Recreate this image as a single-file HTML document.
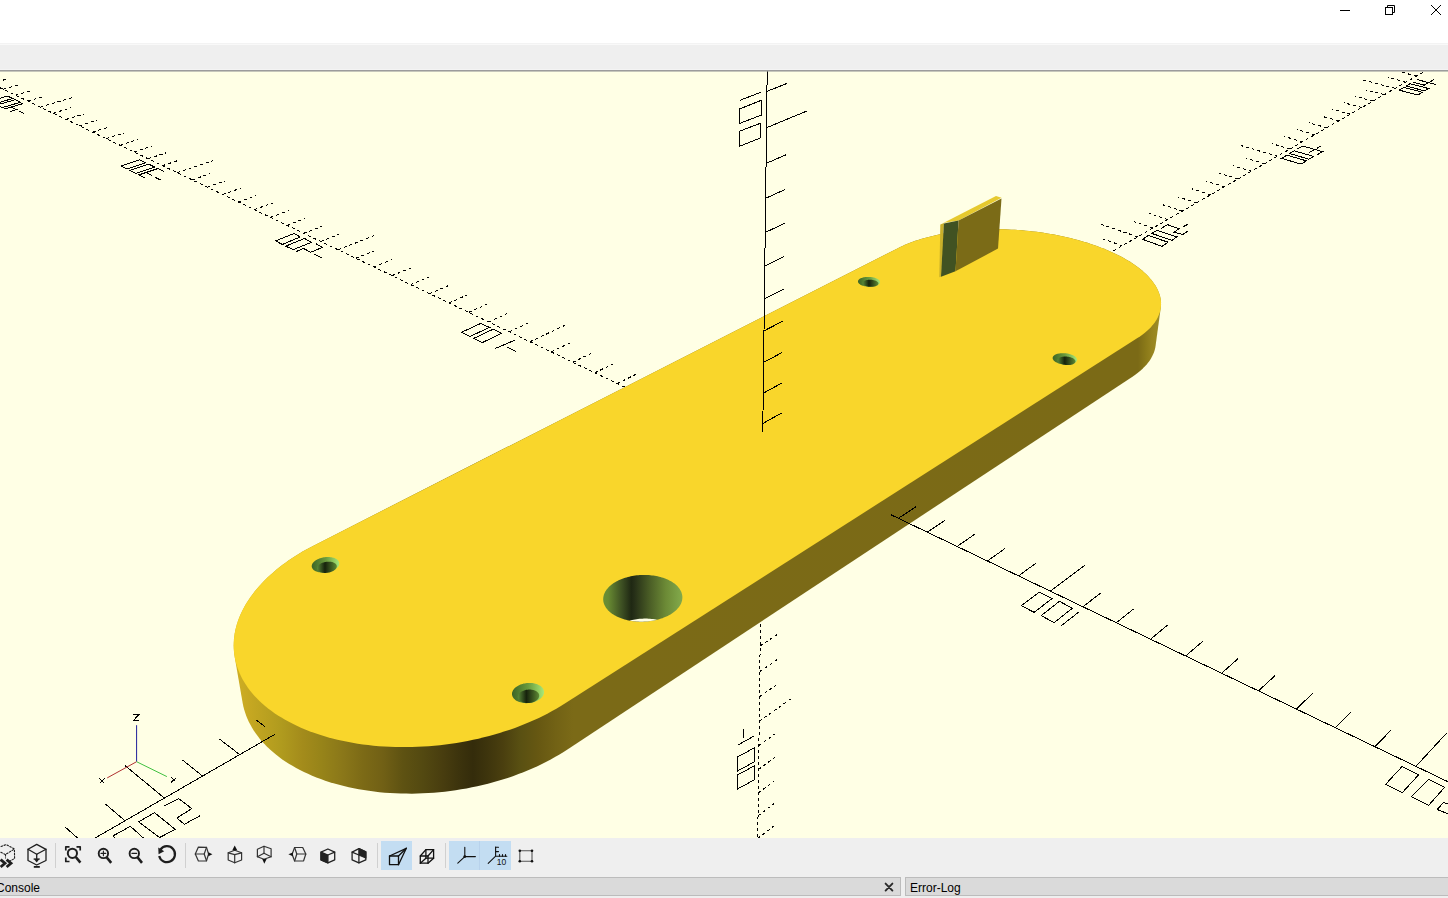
<!DOCTYPE html>
<html><head><meta charset="utf-8">
<style>
html,body{margin:0;padding:0;width:1448px;height:898px;overflow:hidden;background:#fff;font-family:"Liberation Sans",sans-serif;}
#title{position:absolute;left:0;top:0;width:1448px;height:43px;background:#fff;}
#menu{position:absolute;left:0;top:43px;width:1448px;height:27px;background:#efefef;border-top:1px solid #f3f3f3;box-sizing:border-box;}
#menuw{position:absolute;left:0;top:44px;width:1448px;height:1px;background:#f9f9f9;}
#vp{position:absolute;left:0;top:70px;width:1448px;height:768px;background:#ffffe5;}
#vpline{position:absolute;left:0;top:70px;width:1448px;height:1px;background:#9c9c9c;}
#vpline2{position:absolute;left:0;top:71px;width:1448px;height:1px;background:#c6c7bb;}
#vpline0{position:absolute;left:0;top:69px;width:1448px;height:1px;background:#f4f4f4;}
#tb{position:absolute;left:0;top:838px;width:1448px;height:39px;background:#efefef;}
#tabs{position:absolute;left:0;top:877px;width:1448px;height:21px;background:#efefef;}
.tab{position:absolute;top:877px;height:19px;background:#dadada;border:1px solid #bcbcbc;box-sizing:border-box;font-size:12px;color:#000;line-height:17px;}
svg{position:absolute;left:0;top:0;}
.k{stroke:#000;stroke-width:1;fill:none;shape-rendering:crispEdges;}
.d{stroke:#000;stroke-width:1;fill:none;stroke-dasharray:3 3;shape-rendering:crispEdges;}
.ic{stroke:#1a1a1a;stroke-width:1.4;fill:none;stroke-linejoin:round;}
.sep{position:absolute;top:843px;width:1px;height:25px;background:#d0d0d0;}
.hl{position:absolute;top:841px;height:29px;background:#c3ddf2;}
</style></head><body>
<div id="title"></div>
<svg width="1448" height="43" style="top:0">
 <line x1="1340" y1="10.5" x2="1350" y2="10.5" stroke="#000" stroke-width="1"/>
 <rect x="1385.5" y="7.5" width="7" height="7" fill="none" stroke="#000" stroke-width="1"/>
 <polyline points="1387.5,7.5 1387.5,5.5 1394.5,5.5 1394.5,12.5 1392.5,12.5" fill="none" stroke="#000" stroke-width="1"/>
 <line x1="1431" y1="5" x2="1441" y2="15" stroke="#000" stroke-width="1"/>
 <line x1="1441" y1="5" x2="1431" y2="15" stroke="#000" stroke-width="1"/>
</svg>
<div id="menu"></div><div id="menuw"></div>
<div id="vp"></div>
<div id="vpline0"></div><div id="vpline"></div><div id="vpline2"></div>
<svg width="1448" height="898" viewBox="0 0 1448 898" style="top:0">
<defs>
 <clipPath id="vpc"><rect x="0" y="71.5" width="1448" height="766.5"/></clipPath>
 <linearGradient id="side" gradientUnits="userSpaceOnUse" x1="234" y1="0" x2="1162" y2="0">
  <stop offset="0.0000" stop-color="#d0b024"/>
  <stop offset="0.0129" stop-color="#c8a922"/>
  <stop offset="0.0506" stop-color="#b09b1e"/>
  <stop offset="0.0744" stop-color="#a38b1b"/>
  <stop offset="0.0938" stop-color="#978419"/>
  <stop offset="0.1175" stop-color="#8a7719"/>
  <stop offset="0.1390" stop-color="#7c6a16"/>
  <stop offset="0.1606" stop-color="#716015"/>
  <stop offset="0.1821" stop-color="#5e5212"/>
  <stop offset="0.2037" stop-color="#534911"/>
  <stop offset="0.2252" stop-color="#483d0f"/>
  <stop offset="0.2414" stop-color="#3d340d"/>
  <stop offset="0.2575" stop-color="#342c0b"/>
  <stop offset="0.2737" stop-color="#3e350d"/>
  <stop offset="0.2899" stop-color="#4a3f0f"/>
  <stop offset="0.3082" stop-color="#595012"/>
  <stop offset="0.3287" stop-color="#675812"/>
  <stop offset="0.3470" stop-color="#726215"/>
  <stop offset="0.3653" stop-color="#7b6a17"/>
  <stop offset="0.9741" stop-color="#7b6a16"/>
  <stop offset="0.9828" stop-color="#8b7a19"/>
  <stop offset="0.9892" stop-color="#97841f"/>
  <stop offset="0.9957" stop-color="#9c8b24"/>
  <stop offset="1.0000" stop-color="#a08f26"/>
 </linearGradient>
 <linearGradient id="cs" x1="0" y1="0" x2="1" y2="0">
  <stop offset="0" stop-color="#3d6526"/>
  <stop offset="0.5" stop-color="#6a9a3c"/>
  <stop offset="1" stop-color="#a8e878"/>
 </linearGradient>
 <linearGradient id="bore" x1="0" y1="0" x2="1" y2="0">
  <stop offset="0" stop-color="#5a8a38"/>
  <stop offset="0.4" stop-color="#16220c"/>
  <stop offset="1" stop-color="#5f8a34"/>
 </linearGradient>
 <linearGradient id="big" x1="0" y1="0" x2="1" y2="0">
  <stop offset="0" stop-color="#6a9035"/>
  <stop offset="0.063" stop-color="#688a32"/>
  <stop offset="0.24" stop-color="#3c4e22"/>
  <stop offset="0.355" stop-color="#1f2813"/>
  <stop offset="0.39" stop-color="#252e17"/>
  <stop offset="0.59" stop-color="#4b5e26"/>
  <stop offset="0.79" stop-color="#6c8a36"/>
  <stop offset="0.955" stop-color="#7ea447"/>
  <stop offset="1" stop-color="#82a84a"/>
 </linearGradient>
</defs>
<g clip-path="url(#vpc)">
<polygon points="1132.82,376.38 567.09,749.65 563.16,752.18 559.12,754.66 554.97,757.08 550.72,759.44 546.38,761.74 541.94,763.98 537.41,766.14 532.8,768.24 528.1,770.27 523.32,772.23 518.46,774.11 513.53,775.91 508.53,777.63 503.47,779.28 498.34,780.84 493.16,782.32 487.93,783.71 482.65,785.02 477.33,786.24 471.96,787.36 466.57,788.4 461.14,789.35 455.69,790.21 450.22,790.97 444.73,791.64 439.23,792.21 433.73,792.68 428.23,793.07 422.72,793.35 417.23,793.54 411.75,793.63 406.29,793.62 400.86,793.52 395.45,793.32 390.07,793.02 384.73,792.63 379.43,792.14 374.18,791.55 368.98,790.87 363.84,790.1 358.76,789.23 353.74,788.27 348.79,787.22 343.91,786.08 339.11,784.85 334.39,783.53 329.75,782.13 325.2,780.64 320.75,779.06 316.39,777.41 312.13,775.68 307.97,773.86 303.92,771.97 299.97,770.01 296.14,767.97 292.42,765.86 288.82,763.69 285.33,761.44 281.97,759.14 278.73,756.77 275.62,754.34 272.64,751.85 269.78,749.31 267.06,746.72 264.47,744.07 262.01,741.38 259.69,738.64 257.51,735.86 255.46,733.03 253.55,730.17 251.78,727.28 250.15,724.35 248.66,721.38 247.31,718.39 246.1,715.38 245.02,712.34 244.09,709.28 243.3,706.2 242.65,703.1 234.87,657.99 234.37,654.93 234.01,651.86 233.79,648.78 233.7,645.7 233.76,642.61 233.96,639.52 234.29,636.43 234.75,633.34 235.35,630.26 236.09,627.19 236.95,624.12 237.95,621.07 239.07,618.02 240.32,615 241.69,611.99 243.19,609 244.81,606.03 246.55,603.08 248.41,600.16 250.38,597.26 252.46,594.39 254.66,591.55 256.96,588.74 259.38,585.97 261.89,583.22 264.51,580.52 267.23,577.85 270.05,575.22 272.96,572.63 275.97,570.08 279.07,567.58 282.25,565.12 285.53,562.7 288.88,560.33 292.32,558.01 295.84,555.74 299.43,553.51 303.09,551.34 306.83,549.22 310.64,547.15 314.51,545.14 897.92,248.14 900.23,247 902.6,245.89 905.04,244.81 907.55,243.77 910.12,242.75 912.75,241.77 915.44,240.83 918.19,239.92 921,239.04 923.86,238.2 926.77,237.4 929.73,236.63 932.74,235.9 935.8,235.2 938.91,234.54 942.05,233.92 945.24,233.34 948.47,232.79 951.74,232.28 955.04,231.81 958.37,231.38 961.74,230.99 965.14,230.64 968.56,230.32 972.02,230.05 975.49,229.81 978.99,229.62 982.51,229.46 986.05,229.34 989.6,229.27 993.17,229.23 996.75,229.23 1000.34,229.27 1003.93,229.36 1007.54,229.48 1011.15,229.64 1014.76,229.84 1018.37,230.08 1021.98,230.36 1025.59,230.68 1029.19,231.03 1032.78,231.43 1036.36,231.86 1039.93,232.34 1043.49,232.85 1047.03,233.4 1050.55,233.99 1054.05,234.61 1057.53,235.28 1060.99,235.98 1064.42,236.71 1067.82,237.48 1071.19,238.29 1074.53,239.14 1077.84,240.02 1081.11,240.93 1084.34,241.88 1087.53,242.86 1090.68,243.88 1093.78,244.93 1096.84,246.01 1099.85,247.13 1102.81,248.27 1105.71,249.45 1108.57,250.65 1111.36,251.89 1114.1,253.15 1116.78,254.45 1119.4,255.77 1121.95,257.12 1124.44,258.49 1126.86,259.89 1129.22,261.31 1131.5,262.76 1133.71,264.23 1135.84,265.73 1137.9,267.24 1139.89,268.78 1141.79,270.34 1143.61,271.91 1145.35,273.5 1147.01,275.11 1148.58,276.74 1150.06,278.38 1151.45,280.03 1152.76,281.7 1153.97,283.38 1155.1,285.07 1156.12,286.77 1157.06,288.48 1157.9,290.2 1158.64,291.92 1159.28,293.65 1159.83,295.38 1160.27,297.12 1160.62,298.85 1160.86,300.59 1161,302.33 1161.04,304.06 1160.97,305.8 1160.81,307.52 1155.64,345.36 1155.36,347.13 1154.98,348.89 1154.5,350.64 1153.91,352.38 1153.22,354.1 1152.42,355.82 1151.52,357.52 1150.52,359.21 1149.42,360.88 1148.21,362.53 1146.9,364.16 1145.49,365.78 1143.98,367.37 1142.36,368.94 1140.65,370.48 1138.84,372 1136.93,373.49 1134.92,374.95" fill="url(#side)"/>
<polygon points="314.51,545.14 897.92,248.14 900.23,247 902.6,245.89 905.04,244.81 907.55,243.77 910.12,242.75 912.75,241.77 915.44,240.83 918.19,239.92 921,239.04 923.86,238.2 926.77,237.4 929.73,236.63 932.74,235.9 935.8,235.2 938.91,234.54 942.05,233.92 945.24,233.34 948.47,232.79 951.74,232.28 955.04,231.81 958.37,231.38 961.74,230.99 965.14,230.64 968.56,230.32 972.02,230.05 975.49,229.81 978.99,229.62 982.51,229.46 986.05,229.34 989.6,229.27 993.17,229.23 996.75,229.23 1000.34,229.27 1003.93,229.36 1007.54,229.48 1011.15,229.64 1014.76,229.84 1018.37,230.08 1021.98,230.36 1025.59,230.68 1029.19,231.03 1032.78,231.43 1036.36,231.86 1039.93,232.34 1043.49,232.85 1047.03,233.4 1050.55,233.99 1054.05,234.61 1057.53,235.28 1060.99,235.98 1064.42,236.71 1067.82,237.48 1071.19,238.29 1074.53,239.14 1077.84,240.02 1081.11,240.93 1084.34,241.88 1087.53,242.86 1090.68,243.88 1093.78,244.93 1096.84,246.01 1099.85,247.13 1102.81,248.27 1105.71,249.45 1108.57,250.65 1111.36,251.89 1114.1,253.15 1116.78,254.45 1119.4,255.77 1121.95,257.12 1124.44,258.49 1126.86,259.89 1129.22,261.31 1131.5,262.76 1133.71,264.23 1135.84,265.73 1137.9,267.24 1139.89,268.78 1141.79,270.34 1143.61,271.91 1145.35,273.5 1147.01,275.11 1148.58,276.74 1150.06,278.38 1151.45,280.03 1152.76,281.7 1153.97,283.38 1155.1,285.07 1156.12,286.77 1157.06,288.48 1157.9,290.2 1158.64,291.92 1159.28,293.65 1159.83,295.38 1160.27,297.12 1160.62,298.85 1160.86,300.59 1161,302.33 1161.04,304.06 1160.97,305.8 1160.81,307.52 1160.53,309.25 1160.16,310.96 1159.68,312.67 1159.09,314.36 1158.4,316.05 1157.6,317.73 1156.7,319.39 1155.7,321.03 1154.58,322.66 1153.37,324.27 1152.05,325.87 1150.63,327.44 1149.11,329 1147.48,330.53 1145.76,332.03 1143.93,333.52 1142,334.97 1139.98,336.4 1137.86,337.8 564.46,703.79 560.46,706.28 556.34,708.72 552.12,711.11 547.8,713.44 543.38,715.7 538.86,717.9 534.25,720.04 529.55,722.1 524.77,724.1 519.9,726.03 514.96,727.88 509.94,729.65 504.85,731.35 499.7,732.97 494.48,734.51 489.21,735.97 483.88,737.34 478.51,738.63 473.09,739.83 467.63,740.94 462.14,741.97 456.62,742.9 451.07,743.74 445.51,744.5 439.92,745.15 434.33,745.72 428.73,746.19 423.13,746.56 417.53,746.84 411.94,747.03 406.37,747.12 400.82,747.11 395.29,747.01 389.79,746.81 384.32,746.52 378.89,746.13 373.5,745.65 368.16,745.07 362.88,744.4 357.65,743.64 352.48,742.79 347.38,741.84 342.35,740.8 337.39,739.68 332.52,738.47 327.72,737.17 323.01,735.78 318.39,734.32 313.87,732.77 309.44,731.14 305.12,729.43 300.9,727.64 296.79,725.78 292.78,723.84 288.9,721.84 285.13,719.76 281.47,717.62 277.94,715.41 274.54,713.14 271.26,710.8 268.11,708.41 265.09,705.96 262.2,703.46 259.44,700.9 256.82,698.3 254.34,695.65 251.99,692.95 249.79,690.21 247.72,687.44 245.8,684.62 244.01,681.77 242.37,678.88 240.87,675.97 239.52,673.03 238.3,670.06 237.23,667.07 236.3,664.06 235.52,661.03 234.87,657.99 234.37,654.93 234.01,651.86 233.79,648.78 233.7,645.7 233.76,642.61 233.96,639.52 234.29,636.43 234.75,633.34 235.35,630.26 236.09,627.19 236.95,624.12 237.95,621.07 239.07,618.02 240.32,615 241.69,611.99 243.19,609 244.81,606.03 246.55,603.08 248.41,600.16 250.38,597.26 252.46,594.39 254.66,591.55 256.96,588.74 259.38,585.97 261.89,583.22 264.51,580.52 267.23,577.85 270.05,575.22 272.96,572.63 275.97,570.08 279.07,567.58 282.25,565.12 285.53,562.7 288.88,560.33 292.32,558.01 295.84,555.74 299.43,553.51 303.09,551.34 306.83,549.22 310.64,547.15" fill="#f9d62b"/>
<polygon points="314.44,570.53 315.05,570.88 315.7,571.21 316.41,571.51 317.15,571.78 317.94,572.01 318.77,572.21 319.63,572.37 320.52,572.49 321.44,572.57 322.37,572.62 323.32,572.63 324.28,572.6 325.25,572.53 326.21,572.42 327.18,572.28 328.13,572.1 329.07,571.88 330,571.63 330.9,571.34 331.78,571.03 332.62,570.68 333.43,570.3 334.2,569.9 334.93,569.47 335.61,569.02 336.24,568.55 336.81,568.06 337.33,567.56 337.8,567.04 338.2,566.51 338.54,565.98 338.82,565.44 339.03,564.89 339.18,564.35 339.26,563.81 339.27,563.27 339.21,562.74 339.09,562.22 338.91,561.72 338.65,561.23 338.34,560.75 337.96,560.3 337.52,559.87 337.03,559.46 336.47,559.08 335.87,558.73 335.22,558.41 334.51,558.11 333.77,557.85 332.99,557.63 332.17,557.44 331.31,557.28 330.43,557.16 329.53,557.08 328.61,557.03 327.67,557.02 326.72,557.05 325.77,557.12 324.81,557.22 323.86,557.37 322.91,557.54 321.98,557.75 321.06,558 320.17,558.28 319.3,558.59 318.46,558.93 317.65,559.3 316.89,559.7 316.16,560.12 315.48,560.56 314.84,561.02 314.26,561.51 313.73,562.01 313.26,562.52 312.85,563.05 312.5,563.58 312.21,564.12 311.99,564.66 311.83,565.21 311.74,565.75 311.71,566.29 311.76,566.82 311.87,567.34 312.05,567.85 312.29,568.35 312.6,568.83 312.97,569.29 313.4,569.72 313.89,570.14" fill="url(#cs)"/>
<polygon points="318.96,571.43 319.39,571.68 319.86,571.92 320.37,572.14 320.91,572.33 321.47,572.49 322.07,572.63 322.69,572.75 323.32,572.84 323.98,572.9 324.65,572.93 325.33,572.94 326.02,572.91 326.72,572.87 327.41,572.79 328.1,572.69 328.79,572.56 329.47,572.4 330.13,572.22 330.78,572.01 331.41,571.79 332.01,571.54 332.6,571.27 333.15,570.98 333.67,570.67 334.16,570.35 334.61,570.01 335.03,569.66 335.41,569.29 335.74,568.92 336.03,568.54 336.28,568.15 336.48,567.76 336.63,567.37 336.74,566.98 336.8,566.59 336.81,566.2 336.77,565.82 336.68,565.44 336.55,565.08 336.37,564.73 336.14,564.38 335.87,564.06 335.55,563.75 335.2,563.45 334.8,563.18 334.37,562.92 333.9,562.69 333.39,562.48 332.86,562.29 332.29,562.12 331.7,561.99 331.09,561.87 330.45,561.79 329.8,561.73 329.14,561.69 328.46,561.69 327.78,561.71 327.09,561.76 326.4,561.83 325.71,561.94 325.03,562.06 324.36,562.22 323.7,562.39 323.06,562.6 322.43,562.82 321.83,563.07 321.25,563.33 320.69,563.62 320.17,563.92 319.68,564.24 319.23,564.58 318.81,564.93 318.43,565.29 318.09,565.66 317.79,566.04 317.54,566.42 317.34,566.81 317.18,567.2 317.07,567.6 317,567.99 316.99,568.38 317.02,568.76 317.1,569.14 317.23,569.5 317.4,569.86 317.63,570.2 317.89,570.53 318.21,570.85 318.56,571.15" fill="url(#bore)"/>
<polygon points="862.01,285.41 862.63,285.64 863.27,285.85 863.95,286.04 864.65,286.2 865.37,286.35 866.11,286.47 866.86,286.57 867.62,286.65 868.4,286.7 869.17,286.73 869.94,286.74 870.71,286.72 871.47,286.68 872.22,286.61 872.95,286.52 873.66,286.4 874.35,286.27 875.02,286.11 875.65,285.93 876.25,285.73 876.81,285.51 877.34,285.27 877.83,285.02 878.27,284.75 878.67,284.47 879.01,284.17 879.31,283.86 879.56,283.54 879.76,283.22 879.91,282.88 880,282.55 880.04,282.2 880.02,281.86 879.95,281.52 879.83,281.17 879.65,280.83 879.43,280.5 879.15,280.17 878.82,279.85 878.45,279.54 878.03,279.24 877.56,278.96 877.06,278.69 876.51,278.43 875.93,278.19 875.32,277.96 874.68,277.76 874.01,277.58 873.31,277.41 872.6,277.27 871.86,277.15 871.12,277.05 870.36,276.97 869.59,276.92 868.83,276.89 868.06,276.89 867.3,276.91 866.55,276.95 865.81,277.01 865.08,277.1 864.38,277.21 863.69,277.35 863.03,277.5 862.4,277.68 861.8,277.88 861.24,278.09 860.71,278.33 860.23,278.58 859.78,278.84 859.38,279.12 859.03,279.42 858.73,279.72 858.47,280.04 858.27,280.36 858.11,280.69 858.02,281.03 857.97,281.37 857.98,281.72 858.04,282.06 858.15,282.4 858.32,282.74 858.54,283.08 858.81,283.41 859.14,283.73 859.51,284.04 859.92,284.34 860.38,284.63 860.89,284.91 861.43,285.17" fill="url(#cs)"/>
<polygon points="865.48,285.91 865.92,286.07 866.38,286.22 866.87,286.35 867.37,286.47 867.89,286.58 868.42,286.67 868.96,286.74 869.51,286.8 870.07,286.83 870.62,286.86 871.18,286.86 871.73,286.85 872.28,286.81 872.81,286.77 873.34,286.7 873.85,286.62 874.35,286.52 874.82,286.41 875.28,286.28 875.71,286.13 876.12,285.98 876.5,285.81 876.85,285.62 877.16,285.43 877.45,285.22 877.7,285.01 877.92,284.79 878.1,284.56 878.24,284.32 878.34,284.08 878.41,283.84 878.44,283.59 878.43,283.35 878.38,283.1 878.29,282.85 878.17,282.61 878,282.36 877.81,282.13 877.57,281.9 877.3,281.67 877,281.46 876.67,281.25 876.3,281.05 875.91,280.87 875.5,280.69 875.05,280.53 874.59,280.39 874.11,280.25 873.61,280.13 873.09,280.03 872.56,279.94 872.02,279.87 871.48,279.82 870.93,279.78 870.38,279.76 869.83,279.75 869.28,279.77 868.74,279.8 868.2,279.85 867.68,279.91 867.17,279.99 866.68,280.09 866.2,280.2 865.75,280.33 865.32,280.47 864.91,280.63 864.53,280.79 864.18,280.98 863.86,281.17 863.58,281.37 863.32,281.58 863.1,281.8 862.92,282.03 862.77,282.27 862.67,282.5 862.6,282.75 862.56,282.99 862.57,283.24 862.62,283.49 862.7,283.74 862.82,283.98 862.98,284.22 863.18,284.46 863.41,284.69 863.67,284.92 863.97,285.14 864.31,285.34 864.67,285.54 865.06,285.73" fill="url(#bore)"/>
<polygon points="1057.95,363.15 1058.67,363.42 1059.42,363.66 1060.2,363.88 1061,364.08 1061.82,364.25 1062.65,364.4 1063.5,364.51 1064.35,364.6 1065.2,364.67 1066.05,364.7 1066.89,364.71 1067.73,364.69 1068.55,364.63 1069.35,364.56 1070.13,364.45 1070.88,364.31 1071.6,364.15 1072.29,363.97 1072.95,363.76 1073.56,363.52 1074.13,363.26 1074.65,362.99 1075.12,362.69 1075.55,362.37 1075.92,362.04 1076.23,361.69 1076.49,361.32 1076.7,360.95 1076.84,360.57 1076.93,360.17 1076.96,359.78 1076.92,359.37 1076.83,358.97 1076.68,358.57 1076.47,358.16 1076.21,357.77 1075.89,357.37 1075.51,356.99 1075.09,356.61 1074.61,356.25 1074.09,355.9 1073.52,355.56 1072.91,355.24 1072.27,354.94 1071.58,354.66 1070.86,354.39 1070.12,354.15 1069.35,353.94 1068.55,353.74 1067.74,353.57 1066.92,353.43 1066.08,353.32 1065.24,353.23 1064.4,353.17 1063.55,353.13 1062.72,353.13 1061.89,353.15 1061.08,353.2 1060.29,353.28 1059.52,353.38 1058.77,353.51 1058.05,353.67 1057.37,353.85 1056.72,354.06 1056.11,354.29 1055.54,354.54 1055.02,354.82 1054.54,355.11 1054.11,355.42 1053.74,355.75 1053.41,356.1 1053.15,356.46 1052.94,356.83 1052.78,357.21 1052.69,357.6 1052.65,358 1052.68,358.4 1052.76,358.8 1052.9,359.21 1053.1,359.61 1053.36,360.01 1053.67,360.4 1054.04,360.79 1054.46,361.17 1054.93,361.54 1055.45,361.89 1056.01,362.23 1056.62,362.56 1057.27,362.86" fill="url(#cs)"/>
<polygon points="1061.44,363.95 1061.98,364.15 1062.53,364.33 1063.1,364.49 1063.69,364.64 1064.3,364.76 1064.91,364.87 1065.54,364.96 1066.16,365.02 1066.79,365.07 1067.42,365.1 1068.05,365.1 1068.66,365.08 1069.27,365.05 1069.86,364.99 1070.43,364.91 1070.99,364.81 1071.52,364.69 1072.03,364.55 1072.52,364.4 1072.97,364.22 1073.39,364.03 1073.78,363.83 1074.13,363.61 1074.44,363.37 1074.72,363.12 1074.95,362.87 1075.14,362.6 1075.29,362.32 1075.4,362.04 1075.47,361.75 1075.49,361.45 1075.46,361.15 1075.4,360.85 1075.29,360.55 1075.13,360.26 1074.94,359.96 1074.7,359.67 1074.43,359.38 1074.11,359.11 1073.76,358.84 1073.38,358.57 1072.96,358.33 1072.51,358.09 1072.03,357.86 1071.52,357.65 1070.99,357.46 1070.44,357.28 1069.87,357.12 1069.28,356.98 1068.68,356.85 1068.07,356.74 1067.45,356.66 1066.83,356.59 1066.2,356.55 1065.58,356.52 1064.96,356.52 1064.35,356.53 1063.75,356.57 1063.16,356.63 1062.59,356.71 1062.04,356.8 1061.51,356.92 1061,357.06 1060.52,357.21 1060.07,357.38 1059.65,357.57 1059.26,357.77 1058.91,357.99 1058.59,358.22 1058.31,358.47 1058.08,358.73 1057.88,358.99 1057.73,359.27 1057.61,359.55 1057.54,359.84 1057.52,360.13 1057.54,360.43 1057.6,360.73 1057.7,361.03 1057.85,361.33 1058.04,361.62 1058.27,361.92 1058.55,362.2 1058.86,362.48 1059.21,362.75 1059.59,363.02 1060.01,363.27 1060.46,363.51 1060.94,363.74" fill="url(#bore)"/>
<polygon points="516.05,700.41 516.83,700.88 517.67,701.3 518.55,701.69 519.48,702.04 520.45,702.34 521.47,702.59 522.51,702.8 523.58,702.96 524.67,703.07 525.78,703.13 526.9,703.14 528.02,703.1 529.15,703.01 530.27,702.87 531.38,702.68 532.47,702.45 533.54,702.17 534.58,701.84 535.59,701.47 536.56,701.06 537.48,700.61 538.37,700.12 539.2,699.6 539.97,699.05 540.68,698.46 541.34,697.85 541.92,697.22 542.44,696.57 542.89,695.9 543.26,695.21 543.56,694.52 543.79,693.82 543.93,693.11 544,692.41 543.99,691.71 543.91,691.01 543.74,690.33 543.5,689.66 543.19,689 542.8,688.37 542.34,687.76 541.81,687.17 541.21,686.61 540.55,686.09 539.83,685.6 539.05,685.14 538.22,684.72 537.34,684.34 536.42,684.01 535.46,683.71 534.46,683.47 533.43,683.27 532.37,683.11 531.29,683 530.2,682.95 529.09,682.94 527.99,682.97 526.88,683.06 525.77,683.19 524.68,683.38 523.6,683.6 522.55,683.88 521.52,684.2 520.52,684.56 519.55,684.96 518.63,685.4 517.75,685.88 516.92,686.39 516.14,686.93 515.42,687.51 514.77,688.11 514.17,688.73 513.64,689.38 513.18,690.04 512.79,690.72 512.48,691.41 512.24,692.11 512.08,692.81 512,693.52 511.99,694.22 512.06,694.92 512.21,695.61 512.44,696.29 512.74,696.95 513.12,697.59 513.57,698.21 514.09,698.8 514.68,699.37 515.34,699.91" fill="url(#cs)"/>
<polygon points="520.52,701.27 521.04,701.58 521.6,701.87 522.19,702.13 522.81,702.36 523.46,702.56 524.14,702.73 524.83,702.86 525.55,702.97 526.28,703.04 527.02,703.08 527.76,703.09 528.52,703.06 529.27,703.01 530.01,702.91 530.75,702.79 531.48,702.63 532.2,702.44 532.89,702.23 533.57,701.98 534.22,701.7 534.84,701.4 535.43,701.08 535.98,700.73 536.5,700.36 536.98,699.97 537.42,699.56 537.81,699.14 538.16,698.7 538.46,698.25 538.71,697.79 538.91,697.33 539.06,696.86 539.16,696.38 539.21,695.91 539.21,695.44 539.15,694.97 539.04,694.51 538.88,694.06 538.67,693.62 538.41,693.2 538.11,692.79 537.75,692.39 537.35,692.02 536.91,691.66 536.43,691.33 535.91,691.03 535.35,690.74 534.76,690.49 534.15,690.26 533.5,690.07 532.83,689.9 532.14,689.76 531.43,689.66 530.71,689.59 529.97,689.55 529.23,689.54 528.49,689.57 527.74,689.63 527,689.72 526.27,689.84 525.55,689.99 524.84,690.18 524.15,690.39 523.48,690.63 522.83,690.9 522.21,691.2 521.63,691.52 521.07,691.87 520.55,692.23 520.07,692.62 519.63,693.02 519.23,693.44 518.88,693.88 518.57,694.32 518.32,694.78 518.11,695.24 517.95,695.71 517.84,696.18 517.79,696.66 517.79,697.13 517.83,697.6 517.94,698.06 518.09,698.51 518.29,698.95 518.55,699.38 518.85,699.8 519.2,700.2 519.6,700.57 520.04,700.93" fill="url(#bore)"/>
<polygon points="614.46,615.24 615.58,615.87 616.75,616.47 617.96,617.04 619.21,617.58 620.49,618.09 621.82,618.57 623.17,619.02 624.56,619.43 625.98,619.81 627.42,620.16 628.89,620.47 630.38,620.75 631.9,620.99 633.43,621.2 634.97,621.37 636.53,621.5 638.1,621.59 639.67,621.65 641.25,621.67 642.83,621.65 644.42,621.6 646,621.51 647.57,621.38 649.14,621.21 650.7,621.01 652.24,620.77 653.77,620.5 655.28,620.19 656.77,619.84 658.24,619.47 659.68,619.05 661.09,618.61 662.48,618.13 663.83,617.62 665.15,617.08 666.44,616.52 667.68,615.92 668.89,615.29 670.05,614.64 671.17,613.97 672.24,613.26 673.27,612.54 674.25,611.79 675.18,611.03 676.06,610.24 676.88,609.43 677.65,608.61 678.37,607.77 679.03,606.92 679.63,606.06 680.17,605.18 680.66,604.29 681.09,603.4 681.45,602.5 681.76,601.59 682.01,600.67 682.19,599.76 682.31,598.84 682.38,597.92 682.38,597.01 682.32,596.09 682.2,595.18 682.02,594.28 681.78,593.38 681.48,592.49 681.12,591.61 680.71,590.74 680.23,589.89 679.7,589.04 679.11,588.21 678.47,587.4 677.78,586.6 677.03,585.82 676.23,585.07 675.38,584.33 674.48,583.61 673.54,582.92 672.55,582.25 671.51,581.6 670.43,580.98 669.31,580.38 668.15,579.82 666.96,579.28 665.73,578.77 664.46,578.29 663.16,577.84 661.84,577.41 660.48,577.03 659.1,576.67 657.69,576.34 656.27,576.05 654.82,575.79 653.36,575.57 651.88,575.38 650.38,575.22 648.88,575.1 647.36,575.01 645.84,574.95 644.32,574.94 642.79,574.95 641.26,575 639.74,575.09 638.22,575.21 636.7,575.36 635.2,575.55 633.71,575.77 632.23,576.03 630.76,576.32 629.31,576.64 627.88,576.99 626.48,577.38 625.1,577.8 623.74,578.25 622.41,578.73 621.11,579.23 619.85,579.77 618.61,580.34 617.42,580.93 616.26,581.55 615.14,582.19 614.06,582.86 613.02,583.55 612.03,584.27 611.08,585 610.19,585.76 609.34,586.54 608.54,587.33 607.79,588.14 607.09,588.97 606.45,589.81 605.87,590.67 605.33,591.54 604.86,592.42 604.44,593.31 604.09,594.2 603.79,595.11 603.55,596.02 603.37,596.93 603.25,597.85 603.19,598.76 603.2,599.68 603.26,600.6 603.39,601.51 603.58,602.42 603.82,603.32 604.13,604.22 604.5,605.11 604.93,605.98 605.42,606.85 605.97,607.7 606.57,608.54 607.24,609.36 607.95,610.17 608.73,610.96 609.56,611.73 610.44,612.48 611.37,613.2 612.35,613.91 613.38,614.59" fill="url(#big)"/>
<polygon points="630.38,620.75 631.9,620.99 633.43,621.2 634.97,621.37 636.53,621.5 638.1,621.59 639.67,621.65 641.25,621.67 642.83,621.65 644.42,621.6 646,621.51 647.57,621.38 649.14,621.21 650.7,621.01 652.24,620.77 653.77,620.5 655.28,620.19 656.77,619.84 657.24,619.72 655.87,619.47 654.43,619.24 652.97,619.04 651.5,618.88 650.01,618.76 648.52,618.67 647.02,618.61 645.52,618.6 644.02,618.61 642.51,618.66 641.01,618.75 639.51,618.87 638.02,619.03 636.54,619.22 635.07,619.45 633.61,619.71 632.17,620 630.74,620.33 629.65,620.61 630.38,620.75" fill="#ffffe5"/>
<polygon points="943.3,222.9 996,195.9 1001.5,197.8 958.6,220.4" fill="#e6c92f"/>
<polygon points="940.3,224.5 944,223 941,276.8 939.3,277.3" fill="#c9b02a"/>
<polygon points="943.9,223.5 958.6,220.4 955.5,271.3 941,276.8" fill="#415222"/>
<polygon points="958.6,220.4 1001.5,198.4 998,248.6 955.5,271.3" fill="#7b6b17"/>
<line x1="767.33" y1="60" x2="762.75" y2="432" class="k"/>
<line x1="762.85" y1="423.5" x2="781.31" y2="413.13" class="k"/>
<line x1="763.23" y1="393.23" x2="781.86" y2="383.04" class="k"/>
<line x1="763.61" y1="362.36" x2="782.42" y2="352.35" class="k"/>
<line x1="764" y1="330.86" x2="782.99" y2="321.06" class="k"/>
<line x1="764.39" y1="298.73" x2="783.57" y2="289.13" class="k"/>
<line x1="764.79" y1="265.94" x2="784.16" y2="256.56" class="k"/>
<line x1="765.21" y1="232.47" x2="784.77" y2="223.32" class="k"/>
<line x1="765.63" y1="198.31" x2="785.39" y2="189.4" class="k"/>
<line x1="766.06" y1="163.42" x2="786.02" y2="154.76" class="k"/>
<line x1="766.5" y1="127.78" x2="806.44" y2="111.17" class="k"/>
<line x1="766.94" y1="91.38" x2="787.33" y2="83.27" class="k"/>
<line x1="760.39" y1="623.7" x2="757.66" y2="845" class="d"/>
<line x1="760.12" y1="645.97" x2="777.27" y2="634.45" class="d"/>
<line x1="759.8" y1="671.54" x2="776.8" y2="659.91" class="d"/>
<line x1="759.49" y1="696.65" x2="776.35" y2="684.91" class="d"/>
<line x1="759.19" y1="721.32" x2="792.34" y2="697.83" class="d"/>
<line x1="758.89" y1="745.56" x2="775.46" y2="733.62" class="d"/>
<line x1="758.6" y1="769.38" x2="775.03" y2="757.35" class="d"/>
<line x1="758.31" y1="792.8" x2="774.6" y2="780.68" class="d"/>
<line x1="758.02" y1="815.81" x2="774.18" y2="803.61" class="d"/>
<line x1="757.75" y1="838.44" x2="773.77" y2="826.16" class="d"/>
<line x1="890.9" y1="514.73" x2="1686.8" y2="896.18" class="k"/>
<line x1="898.34" y1="518.3" x2="916.34" y2="506.55" class="k"/>
<line x1="927.37" y1="532.21" x2="945.28" y2="520.19" class="k"/>
<line x1="957.05" y1="546.44" x2="974.88" y2="534.14" class="k"/>
<line x1="987.43" y1="561" x2="1005.16" y2="548.42" class="k"/>
<line x1="1018.52" y1="575.9" x2="1036.15" y2="563.02" class="k"/>
<line x1="1050.35" y1="591.15" x2="1085.03" y2="565.06" class="k"/>
<line x1="1082.95" y1="606.78" x2="1100.34" y2="593.28" class="k"/>
<line x1="1116.34" y1="622.78" x2="1133.59" y2="608.95" class="k"/>
<line x1="1150.56" y1="639.18" x2="1167.66" y2="625.01" class="k"/>
<line x1="1185.63" y1="655.98" x2="1202.57" y2="641.46" class="k"/>
<line x1="1221.58" y1="673.22" x2="1238.35" y2="658.33" class="k"/>
<line x1="1258.46" y1="690.89" x2="1275.03" y2="675.62" class="k"/>
<line x1="1296.3" y1="709.02" x2="1312.66" y2="693.36" class="k"/>
<line x1="1335.12" y1="727.63" x2="1351.27" y2="711.55" class="k"/>
<line x1="1374.99" y1="746.74" x2="1390.89" y2="730.23" class="k"/>
<line x1="1415.92" y1="766.36" x2="1446.86" y2="732.84" class="k"/>
<line x1="1457.98" y1="786.52" x2="1473.35" y2="769.1" class="k"/>
<line x1="1501.21" y1="807.23" x2="1516.27" y2="789.33" class="k"/>
<line x1="1545.65" y1="828.53" x2="1560.39" y2="810.13" class="k"/>
<line x1="1591.36" y1="850.44" x2="1605.75" y2="831.51" class="k"/>
<line x1="1638.39" y1="872.98" x2="1652.41" y2="853.5" class="k"/>
<line x1="624.6" y1="387.1" x2="-99.15" y2="40.23" class="d"/>
<line x1="617.38" y1="383.64" x2="635.81" y2="374.32" class="d"/>
<line x1="594.87" y1="372.85" x2="613.31" y2="363.71" class="d"/>
<line x1="572.8" y1="362.27" x2="591.25" y2="353.31" class="d"/>
<line x1="551.16" y1="351.9" x2="569.61" y2="343.11" class="d"/>
<line x1="529.93" y1="341.73" x2="566.53" y2="324.63" class="d"/>
<line x1="509.11" y1="331.75" x2="527.55" y2="323.29" class="d"/>
<line x1="488.68" y1="321.96" x2="507.12" y2="313.66" class="d"/>
<line x1="468.63" y1="312.35" x2="487.06" y2="304.2" class="d"/>
<line x1="448.96" y1="302.92" x2="467.37" y2="294.92" class="d"/>
<line x1="429.64" y1="293.66" x2="448.04" y2="285.81" class="d"/>
<line x1="410.68" y1="284.57" x2="429.05" y2="276.86" class="d"/>
<line x1="392.05" y1="275.65" x2="410.41" y2="268.07" class="d"/>
<line x1="373.76" y1="266.88" x2="392.09" y2="259.44" class="d"/>
<line x1="355.79" y1="258.27" x2="374.1" y2="250.96" class="d"/>
<line x1="338.14" y1="249.81" x2="374.43" y2="235.55" class="d"/>
<line x1="320.79" y1="241.5" x2="339.05" y2="234.44" class="d"/>
<line x1="303.75" y1="233.32" x2="321.97" y2="226.39" class="d"/>
<line x1="286.99" y1="225.29" x2="305.18" y2="218.47" class="d"/>
<line x1="270.52" y1="217.4" x2="288.67" y2="210.69" class="d"/>
<line x1="254.32" y1="209.64" x2="272.44" y2="203.04" class="d"/>
<line x1="238.4" y1="202" x2="256.48" y2="195.52" class="d"/>
<line x1="222.73" y1="194.5" x2="240.78" y2="188.12" class="d"/>
<line x1="207.33" y1="187.11" x2="225.33" y2="180.84" class="d"/>
<line x1="192.17" y1="179.85" x2="210.14" y2="173.68" class="d"/>
<line x1="177.26" y1="172.7" x2="212.87" y2="160.63" class="d"/>
<line x1="162.59" y1="165.67" x2="180.47" y2="159.69" class="d"/>
<line x1="148.15" y1="158.75" x2="165.99" y2="152.86" class="d"/>
<line x1="133.93" y1="151.94" x2="151.73" y2="146.14" class="d"/>
<line x1="119.94" y1="145.23" x2="137.69" y2="139.53" class="d"/>
<line x1="106.17" y1="138.63" x2="123.87" y2="133.01" class="d"/>
<line x1="92.6" y1="132.13" x2="110.27" y2="126.6" class="d"/>
<line x1="79.25" y1="125.73" x2="96.86" y2="120.28" class="d"/>
<line x1="66.09" y1="119.42" x2="83.66" y2="114.06" class="d"/>
<line x1="53.14" y1="113.21" x2="70.66" y2="107.93" class="d"/>
<line x1="40.37" y1="107.1" x2="75.1" y2="96.75" class="d"/>
<line x1="27.8" y1="101.07" x2="45.22" y2="95.94" class="d"/>
<line x1="15.41" y1="95.13" x2="32.78" y2="90.08" class="d"/>
<line x1="3.2" y1="89.28" x2="20.53" y2="84.3" class="d"/>
<line x1="-8.83" y1="83.52" x2="8.45" y2="78.61" class="d"/>
<line x1="-20.69" y1="77.83" x2="-3.46" y2="72.99" class="d"/>
<line x1="-32.38" y1="72.23" x2="-15.2" y2="67.46" class="d"/>
<line x1="-43.9" y1="66.71" x2="-26.78" y2="62" class="d"/>
<line x1="-55.26" y1="61.26" x2="-38.19" y2="56.62" class="d"/>
<line x1="-66.46" y1="55.89" x2="-49.45" y2="51.32" class="d"/>
<line x1="-77.51" y1="50.6" x2="-43.78" y2="41.63" class="d"/>
<line x1="-88.41" y1="45.38" x2="-71.49" y2="40.93" class="d"/>
<line x1="274.6" y1="734.52" x2="-291.05" y2="1060.69" class="k"/>
<line x1="239.72" y1="754.63" x2="219.61" y2="739.14" class="k"/>
<line x1="202.61" y1="776.03" x2="182.61" y2="760.09" class="k"/>
<line x1="164.39" y1="798.07" x2="125.06" y2="765.59" class="k"/>
<line x1="125.02" y1="820.77" x2="105.28" y2="803.86" class="k"/>
<line x1="84.45" y1="844.16" x2="64.87" y2="826.73" class="k"/>
<line x1="42.62" y1="868.29" x2="23.21" y2="850.31" class="k"/>
<line x1="-0.54" y1="893.17" x2="-19.74" y2="874.63" class="k"/>
<line x1="-45.07" y1="918.85" x2="-64.06" y2="899.71" class="k"/>
<line x1="-91.06" y1="945.37" x2="-109.81" y2="925.61" class="k"/>
<line x1="-138.58" y1="972.77" x2="-157.05" y2="952.35" class="k"/>
<line x1="-187.69" y1="1001.09" x2="-205.86" y2="979.98" class="k"/>
<line x1="-238.49" y1="1030.38" x2="-256.33" y2="1008.54" class="k"/>
<line x1="255.6" y1="719.6" x2="264.7" y2="726.5" class="k"/>
<line x1="1113.5" y1="250.78" x2="1658.6" y2="-63.54" class="d"/>
<line x1="1122.34" y1="245.68" x2="1103.06" y2="239.08" class="d"/>
<line x1="1137.76" y1="236.8" x2="1099.6" y2="223.92" class="d"/>
<line x1="1152.88" y1="228.07" x2="1133.75" y2="221.71" class="d"/>
<line x1="1167.73" y1="219.51" x2="1148.67" y2="213.26" class="d"/>
<line x1="1182.31" y1="211.1" x2="1163.32" y2="204.96" class="d"/>
<line x1="1196.63" y1="202.85" x2="1177.72" y2="196.82" class="d"/>
<line x1="1210.7" y1="194.74" x2="1191.86" y2="188.81" class="d"/>
<line x1="1224.52" y1="186.77" x2="1205.75" y2="180.95" class="d"/>
<line x1="1238.09" y1="178.94" x2="1219.4" y2="173.22" class="d"/>
<line x1="1251.43" y1="171.25" x2="1232.82" y2="165.63" class="d"/>
<line x1="1264.54" y1="163.69" x2="1246" y2="158.17" class="d"/>
<line x1="1277.43" y1="156.26" x2="1240.73" y2="145.47" class="d"/>
<line x1="1290.1" y1="148.95" x2="1271.71" y2="143.61" class="d"/>
<line x1="1302.55" y1="141.77" x2="1284.24" y2="136.52" class="d"/>
<line x1="1314.8" y1="134.71" x2="1296.57" y2="129.54" class="d"/>
<line x1="1326.85" y1="127.76" x2="1308.69" y2="122.68" class="d"/>
<line x1="1338.7" y1="120.92" x2="1320.62" y2="115.93" class="d"/>
<line x1="1350.36" y1="114.2" x2="1332.35" y2="109.29" class="d"/>
<line x1="1361.83" y1="107.59" x2="1343.9" y2="102.75" class="d"/>
<line x1="1373.12" y1="101.08" x2="1355.27" y2="96.32" class="d"/>
<line x1="1384.23" y1="94.67" x2="1366.45" y2="89.99" class="d"/>
<line x1="1395.17" y1="88.37" x2="1359.96" y2="79.2" class="d"/>
<line x1="1405.93" y1="82.16" x2="1388.3" y2="77.62" class="d"/>
<line x1="1416.53" y1="76.05" x2="1398.98" y2="71.58" class="d"/>
<line x1="1426.97" y1="70.03" x2="1409.49" y2="65.63" class="d"/>
<line x1="1437.24" y1="64.1" x2="1419.84" y2="59.77" class="d"/>
<line x1="1447.36" y1="58.27" x2="1430.03" y2="54" class="d"/>
<line x1="1457.33" y1="52.52" x2="1440.08" y2="48.31" class="d"/>
<line x1="1467.16" y1="46.85" x2="1449.97" y2="42.71" class="d"/>
<line x1="1476.83" y1="41.28" x2="1459.72" y2="37.19" class="d"/>
<line x1="1486.37" y1="35.78" x2="1469.33" y2="31.75" class="d"/>
<line x1="1495.76" y1="30.36" x2="1462.02" y2="22.47" class="d"/>
<line x1="1505.02" y1="25.02" x2="1488.13" y2="21.11" class="d"/>
<line x1="1514.15" y1="19.76" x2="1497.33" y2="15.9" class="d"/>
<line x1="1523.15" y1="14.57" x2="1506.4" y2="10.77" class="d"/>
<line x1="1532.02" y1="9.45" x2="1515.34" y2="5.71" class="d"/>
<line x1="1540.76" y1="4.41" x2="1524.16" y2="0.72" class="d"/>
<line x1="1549.38" y1="-0.56" x2="1532.85" y2="-4.2" class="d"/>
<line x1="1557.89" y1="-5.46" x2="1541.42" y2="-9.05" class="d"/>
<line x1="1566.27" y1="-10.3" x2="1549.88" y2="-13.84" class="d"/>
<line x1="1574.55" y1="-15.07" x2="1558.22" y2="-18.56" class="d"/>
<line x1="1582.71" y1="-19.77" x2="1550.36" y2="-26.63" class="d"/>
<line x1="1590.76" y1="-24.42" x2="1574.57" y2="-27.82" class="d"/>
<line x1="1598.7" y1="-29" x2="1582.58" y2="-32.35" class="d"/>
<line x1="1606.53" y1="-33.51" x2="1590.48" y2="-36.83" class="d"/>
<line x1="1614.27" y1="-37.97" x2="1598.29" y2="-41.24" class="d"/>
<line x1="1621.9" y1="-42.37" x2="1605.98" y2="-45.6" class="d"/>
<line x1="1629.43" y1="-46.72" x2="1613.58" y2="-49.9" class="d"/>
<line x1="1636.86" y1="-51" x2="1621.08" y2="-54.15" class="d"/>
<line x1="1644.2" y1="-55.24" x2="1628.49" y2="-58.34" class="d"/>
<line x1="1651.45" y1="-59.41" x2="1635.8" y2="-62.47" class="d"/>
<line x1="740" y1="100.3" x2="760.6" y2="92.3" class="k"/>
<polygon points="739.5,109 761.2,100.3 761.2,115.1 739.5,123.5" class="k"/>
<polygon points="739.5,131.2 760.6,123.2 760.6,137.9 739.5,146.3" class="k"/>
<line x1="743.4" y1="729" x2="743.4" y2="737.6" class="k"/>
<line x1="738" y1="745" x2="754" y2="736" class="k"/>
<polygon points="737.5,757 754,748 754,762 737.5,771" class="k"/>
<polygon points="737.5,775 754,766 754,780 737.5,789" class="k"/>
<polygon points="1021.3,605.7 1039.3,592.2 1052.3,598.5 1034,612.3" class="k"/>
<polygon points="1041.2,615.7 1059.4,601.3 1072.4,608.2 1054.2,622.6" class="k"/>
<line x1="1061.4" y1="625.6" x2="1078.8" y2="612.1" class="k"/>
<polygon points="1385.7,784.2 1402.2,766.4 1418.6,774.9 1402.2,792.7" class="k"/>
<polygon points="1411.4,796.7 1428.6,779.4 1444.6,787.4 1428.6,805.4" class="k"/>
<polyline points="1450,804.4 1443.4,802.6 1437.3,809.5 1450,814.7" class="k"/>
<polygon points="461.4,332.3 480.9,323.4 489.5,327.5 470,336.4" class="k"/>
<polygon points="473.7,338.4 493.2,329.2 501.5,333.4 482.3,342.6" class="k"/>
<line x1="495.4" y1="348.4" x2="514.6" y2="340.3" class="k"/>
<line x1="507.1" y1="347" x2="515.7" y2="351.5" class="k"/>
<polygon points="275.6,240.9 294.2,233.4 300.1,237 282.3,244.5" class="k"/>
<polygon points="285.6,246.2 304.5,238.4 311.5,242.3 293.4,249.5" class="k"/>
<polyline points="296.5,251.5 303.4,248.4 310.7,252.3 322.6,247.3 316.2,243.9" class="k"/>
<line x1="314.3" y1="254.2" x2="321.5" y2="257.6" class="k"/>
<polyline points="163.6,806.1 178.5,798.6 191.8,808.6 176.9,818 184.3,824.3 200.1,815.7" class="k"/>
<polygon points="138.7,821.8 154.5,812.7 175.2,829.3 159.5,837.6" class="k"/>
<polygon points="113,835.9 130.4,826.3 142.9,837.6 126,848" class="k"/>
<polygon points="1142.6,239.3 1148.4,235.5 1168,242.2 1162,246.4" class="k"/>
<polygon points="1151.5,233.3 1156.8,230.4 1176.9,236.8 1172,240.4" class="k"/>
<polyline points="1161.3,228.4 1167.3,224.6 1179.1,228.8 1173.8,232.4 1182.9,234.4 1187.6,231.3" class="k"/>
<line x1="1183.3" y1="226.6" x2="1187.8" y2="224.4" class="k"/>
<polygon points="1287,155.18 1281.52,158.35 1301,164.09 1306.44,160.87" class="k"/>
<polygon points="1294.21,150.8 1289.55,153.5 1308.97,159.17 1313.6,156.43" class="k"/>
<polyline points="1297.57,149.05 1302.8,146.02 1322.38,151.66 1317.18,154.73" class="k"/>
<polyline points="1309.45,152.49 1314.66,149.44" class="k"/>
<polyline points="1321.29,145.75 1316.62,148.49" class="k"/>
<polygon points="1403.85,87.45 1399.2,90.15 1417.86,95.01 1422.47,92.28" class="k"/>
<polygon points="1409.95,83.73 1405.99,86.02 1424.59,90.84 1428.52,88.52" class="k"/>
<polyline points="1412.84,82.24 1424.21,85.17 1428.64,82.57" class="k"/>
<polyline points="1417.29,79.67 1436.03,84.46" class="k"/>
<polyline points="1434.3,79.43 1430.33,81.76" class="k"/>
<polygon points="139.84,159.86 120.99,166.07 126.84,168.94 145.72,162.7" class="k"/>
<polygon points="148.59,164.08 129.71,170.35 135.91,173.39 154.82,167.08" class="k"/>
<polyline points="144.96,177.93 138.84,174.93 157.87,168.55 164.01,171.51" class="k"/>
<polyline points="151.95,175.58 145.82,172.59" class="k"/>
<polyline points="154.95,177.23 160.99,180.17" class="k"/>
<polygon points="7.56,96.09 -10.77,101.42 -5.76,103.88 12.6,98.52" class="k"/>
<polygon points="15.07,99.71 -3.3,105.08 2.01,107.69 20.4,102.28" class="k"/>
<polyline points="9.75,111.57 16.54,109.56 11.3,107" class="k"/>
<polyline points="4.51,109 23.02,103.54" class="k"/>
<polyline points="19.08,110.97 24.25,113.49" class="k"/>
<line x1="136.6" y1="725.2" x2="136.6" y2="761.7" stroke="#1f1f9a" stroke-width="1"/>
<line x1="136.6" y1="761.7" x2="107.2" y2="777.9" stroke="#b03030" stroke-width="1"/>
<line x1="136.6" y1="761.7" x2="166.9" y2="776.6" stroke="#40c040" stroke-width="1"/>
<polyline points="133.2,714.6 139,714.6 133.2,720.6 139,720.6" class="k"/>
<line x1="99.5" y1="778.5" x2="104.5" y2="783.5" class="k"/>
<line x1="104.5" y1="778.5" x2="99.5" y2="783.5" class="k"/>
<line x1="171" y1="782.5" x2="176.5" y2="777.5" class="k"/>
<line x1="171.5" y1="777.5" x2="174.5" y2="781" class="k"/>
</g>
</svg>
<div id="tb"></div>
<div class="sep" style="left:55px"></div>
<div class="sep" style="left:185px"></div>
<div class="sep" style="left:377px"></div>
<div class="sep" style="left:445px"></div>
<div class="hl" style="left:381px;width:31px"></div>
<div class="hl" style="left:449px;width:62px"></div>
<div style="position:absolute;left:479px;top:841px;width:1px;height:29px;background:#b8d2ec"></div>
<svg width="1448" height="898" viewBox="0 0 1448 898" style="top:0">
<g fill="none" stroke="#1e1e1e" stroke-width="1.3" stroke-linejoin="round" stroke-linecap="round">
 <!-- icon 1: dashed cube with chevrons -->
 <g stroke-dasharray="1.6 1.6" stroke-width="1.1">
  <polyline points="-2,847.5 6.2,844.6 14.4,849 14.6,858.5 9,861.5"/>
  <polyline points="-2,851 5.5,854.5 14.4,849"/>
  <line x1="5.5" y1="854.5" x2="5.5" y2="858"/>
 </g>
 <path d="M0.6,859.6 L5,863.3 L0.6,867 M6.6,859.6 L11,863.3 L6.6,867" stroke-width="2.8" stroke-linecap="butt" stroke-linejoin="miter"/>
 <!-- icon 2: cube with down arrow -->
 <polygon points="36.7,844.4 46,849.3 46,860.5 36.7,865 28,860.5 28,849.3"/>
 <polyline points="28,849.3 36.7,854.3 46,849.3"/>
 <line x1="36.7" y1="854.3" x2="36.7" y2="858.5"/>
 <polygon points="33.8,858.8 39.6,858.8 36.7,862.5" fill="#1e1e1e" stroke="none"/>
 <line x1="34" y1="859" x2="39.4" y2="859" stroke-width="1.2"/>
 <rect x="33.8" y="866" width="6" height="1.8" fill="#1e1e1e" stroke="none"/>
 <!-- zoom all -->
 <path d="M65.8,850.5 V846.8 H69.5 M76.5,846.8 H80.2 V850.5 M65.8,857.5 V861.5 H69.5" stroke-width="1.7" stroke-linecap="butt"/>
 <circle cx="72.4" cy="853.3" r="4.6" stroke-width="2"/>
 <line x1="75.8" y1="857" x2="80.4" y2="862.6" stroke-width="2.6" stroke-linecap="butt"/>
 <!-- zoom in -->
 <circle cx="103.4" cy="853.4" r="4.7" stroke-width="1.9"/>
 <path d="M101,853.4 H105.8 M103.4,851 V855.8" stroke-width="1.1"/>
 <line x1="106.6" y1="857.2" x2="111.2" y2="862.9" stroke-width="2.6" stroke-linecap="butt"/>
 <!-- zoom out -->
 <circle cx="134.3" cy="853.4" r="4.7" stroke-width="1.9"/>
 <path d="M131.9,853.4 H136.7" stroke-width="1.1"/>
 <line x1="137.5" y1="857.2" x2="142" y2="862.9" stroke-width="2.6" stroke-linecap="butt"/>
 <!-- reset -->
 <path d="M160.5,849.5 A8,8 0 1 1 159.2,856" stroke-width="2.2" stroke-linecap="butt"/>
 <polygon points="158.2,847.4 164.2,851.2 158.6,854.2" fill="#1e1e1e" stroke="none"/>
 <!-- right view -->
 <g stroke="#333" stroke-width="1.2">
 <polygon points="198.4,847.1 206.5,847.4 208.6,854 206.5,860.8 198.4,861 195.3,854"/>
 <polyline points="195.3,854 204.2,854 206.5,847.4 M204.2,854 206.5,860.8"/>
 <line x1="204.2" y1="854" x2="206.5" y2="860.8"/>
 </g>
 <polygon points="208.4,852.3 212.4,854.2 208.4,856.2" fill="#111" stroke="none"/>
 <!-- top view -->
 <g stroke="#333" stroke-width="1.2">
 <polygon points="234.7,850.2 241.6,852.8 241.6,860 234.7,862.8 228.2,860 228.2,852.8"/>
 <polyline points="228.2,852.8 234.7,854.6 241.6,852.8"/>
 <line x1="234.7" y1="854.6" x2="234.7" y2="862.8"/>
 </g>
 <polygon points="232.3,850.3 234.7,845.5 237.2,850.3" fill="#111" stroke="none"/>
 <!-- bottom view -->
 <g stroke="#333" stroke-width="1.2">
 <polygon points="264,846.3 271.1,848.8 271.1,856.8 264,859.2 257.4,856.8 257.4,849.2"/>
 <polyline points="257.4,856.8 264,853.2 271.1,856.8"/>
 <line x1="264" y1="853.2" x2="264" y2="846.3"/>
 </g>
 <polygon points="262.3,859 264.3,863.8 266.6,859" fill="#111" stroke="none"/>
 <!-- left view -->
 <g stroke="#333" stroke-width="1.2">
 <polygon points="294.6,847.5 302.7,847.5 305.8,854 303.6,860.8 294.6,861 292.1,854.2"/>
 <polyline points="294.6,847.5 296.8,854 305.8,854"/>
 <line x1="296.8" y1="854" x2="294.6" y2="861"/>
 </g>
 <polygon points="292.8,852.4 288.4,854.3 292.8,856.3" fill="#111" stroke="none"/>
 <!-- front view -->
 <g stroke="#222" stroke-width="1.3">
 <polygon points="327.9,849 334.7,852.1 334.7,859.9 327.9,862.8 321,859.9 321,852.1"/>
 <polygon points="321,852.1 327.9,855 327.9,862.8 321,859.9" fill="#222"/>
 <polyline points="327.9,855 334.7,852.1"/>
 </g>
 <!-- back view -->
 <g stroke="#222" stroke-width="1.3">
 <polygon points="358.9,848.7 365.8,851.8 365.8,859.9 358.9,862.8 352.1,859.9 352.1,852.1"/>
 <polygon points="358.9,848.7 365.8,851.8 365.8,858 358.9,855" fill="#222"/>
 <polyline points="352.1,852.1 358.9,855 358.9,862.8"/>
 </g>
 <!-- perspective -->
 <g stroke="#111" stroke-width="1.3">
 <rect x="389.5" y="856" width="9" height="8.7"/>
 <polyline points="389.5,856 406.3,848.3 398.5,864.7"/>
 <line x1="398.5" y1="856" x2="406.3" y2="848.3"/>
 </g>
 <!-- ortho -->
 <g stroke="#111" stroke-width="1.3">
 <rect x="425.9" y="849.6" width="7.7" height="8.6"/>
 <rect x="420.3" y="856" width="7.7" height="7.2"/>
 <polyline points="420.3,856 425.9,849.6 M428,856 433.6,849.6"/>
 <line x1="420.3" y1="863.2" x2="425.9" y2="858.2"/>
 <line x1="428" y1="863.2" x2="433.6" y2="858.2"/>
 <line x1="428" y1="856" x2="433.6" y2="849.6"/>
 </g>
 <!-- axes -->
 <g stroke="#111" stroke-width="1.1">
 <polyline points="464.8,847.3 464.8,856.6 475.4,856.6"/>
 <line x1="464.8" y1="856.6" x2="457.8" y2="863.2"/>
 </g>
 <circle cx="464.8" cy="856.6" r="1.4" fill="#111" stroke="none"/>
 <!-- scale markers -->
 <g stroke="#111" stroke-width="1.1">
 <polyline points="495.6,847 495.6,856.3 506.8,856.3"/>
 <path d="M495.6,847.3 H498.5 M495.6,851.6 H498.5 M499.5,856.3 V854.6 M502.5,856.3 V854.6 M505.5,856.3 V854.6"/>
 <line x1="488.2" y1="863.3" x2="495.4" y2="856.4"/>
 </g>
 <text x="496.8" y="865" font-family="Liberation Sans" font-size="8.5" fill="#111" stroke="none">10</text>
 <!-- edges -->
 <g stroke="#555" stroke-width="1.1">
 <rect x="519.8" y="850.7" width="12.2" height="10.6"/>
 </g>
 <g fill="#111" stroke="none">
 <circle cx="519.8" cy="850.7" r="1.3"/><circle cx="532" cy="850.7" r="1.3"/>
 <circle cx="519.8" cy="861.3" r="1.3"/><circle cx="532" cy="861.3" r="1.3"/>
 </g>
</g>

</svg>
<div id="tabs"></div>
<div class="tab" style="left:-3px;width:904px;"><span style="position:absolute;left:-2px;top:2px">Console</span></div>
<div class="tab" style="left:905px;width:560px;"><span style="position:absolute;left:4px;top:2px">Error-Log</span></div>
<svg width="1448" height="898" style="top:0;pointer-events:none"><path d="M885.6,883.6 L892.4,890.6 M892.4,883.6 L885.6,890.6" stroke="#2a2a2a" stroke-width="1.9" stroke-linecap="round"/></svg>
</body></html>
